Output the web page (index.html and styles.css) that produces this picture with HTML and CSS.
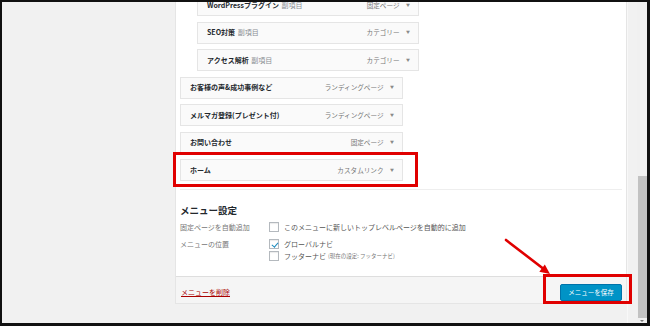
FILE: index.html
```html
<!DOCTYPE html>
<html lang="ja">
<head>
    <meta charset="UTF-8">
    <title>メニュー</title>
    <link rel="stylesheet" href="styles.css">
</head>
<body>
    <div class="frame">
        <div class="screen">
            <div class="side"></div>

            <div class="panel">
                <ul class="menu">
                    <li class="item sub">
                        <span class="title">WordPressプラグイン <em>副項目</em></span>
                        <span class="type">固定ページ <i>▼</i></span>
                    </li>
                    <li class="item sub">
                        <span class="title">SEO対策 <em>副項目</em></span>
                        <span class="type">カテゴリー <i>▼</i></span>
                    </li>
                    <li class="item sub">
                        <span class="title">アクセス解析 <em>副項目</em></span>
                        <span class="type">カテゴリー <i>▼</i></span>
                    </li>
                    <li class="item">
                        <span class="title">お客様の声&amp;成功事例など</span>
                        <span class="type">ランディングページ <i>▼</i></span>
                    </li>
                    <li class="item">
                        <span class="title">メルマガ登録(プレゼント付)</span>
                        <span class="type">ランディングページ <i>▼</i></span>
                    </li>
                    <li class="item">
                        <span class="title">お問い合わせ</span>
                        <span class="type">固定ページ <i>▼</i></span>
                    </li>
                    <li class="item marked">
                        <span class="title">ホーム</span>
                        <span class="type">カスタムリンク <i>▼</i></span>
                    </li>
                </ul>

                <div class="settings">
                    <h3>メニュー設定</h3>
                    <div class="row">
                        <span class="label">固定ページを自動追加</span>
                        <div class="opts">
                            <label><span class="box"></span>このメニューに新しいトップレベルページを自動的に追加</label>
                        </div>
                    </div>
                    <div class="row">
                        <span class="label">メニューの位置</span>
                        <div class="opts">
                            <label><span class="box checked"></span>グローバルナビ</label>
                            <label><span class="box"></span>フッターナビ <small>(現在の設定: フッターナビ)</small></label>
                        </div>
                    </div>
                </div>

                <div class="footer">
                    <a href="#" class="delete">メニューを削除</a>
                    <span class="save-wrap"><button class="save">メニューを保存</button></span>
                </div>
            </div>

            <div class="gutter"></div>
            <div class="scrollbar">
                <div class="thumb"></div>
                <span class="down"></span>
            </div>
        </div>

        <svg class="pointer" width="650" height="326" viewBox="0 0 650 326">
            <line x1="506" y1="240" x2="545" y2="270" stroke="#e00000" stroke-width="2.6" stroke-linecap="round"/>
            <polygon points="550,274 539.3,271.8 544.8,264.6" fill="#e00000"/>
        </svg>
    </div>
</body>
</html>
```

FILE: styles.css
```css
* {
    box-sizing: border-box;
}

body {
    margin: 0;
    font-family: "Noto Sans CJK JP", "Noto Sans", sans-serif;
    color: #23282d;
}

.frame {
    position: relative;
    width: 650px;
    height: 326px;
    border-style: solid;
    border-color: #111;
    border-width: 2px 3px 3px 2px;
    overflow: hidden;
    background: #f1f1f1;
}

.screen {
    display: flex;
    height: 100%;
}

.side {
    width: 173px;
    flex-shrink: 0;
}

/* panel with menu items */
.panel {
    width: 452px;
    flex-shrink: 0;
    align-self: flex-start;
    margin-top: -8px;
    background: #fff;
    border: 1px solid #e5e5e5;
    border-top: none;
}

.menu {
    list-style: none;
    margin: 0;
    padding: 0 4px;
}

.item {
    display: flex;
    justify-content: space-between;
    align-items: center;
    width: 223px;
    height: 22px;
    margin-bottom: 5.5px;
    padding: 0 8px 0 9px;
    background: #fafafa;
    border: 1px solid #e5e5e5;
    font-size: 7px;
    line-height: 1;
}

.item.sub {
    width: 222px;
    margin-left: 17px;
}

.title {
    font-weight: bold;
    color: #23282d;
}

.title em {
    font-style: normal;
    font-weight: normal;
    color: #8a8f94;
    margin-left: 1px;
}

.type {
    color: #777;
    font-size: 6.6px;
}

.type i {
    font-style: normal;
    font-size: 4px;
    margin-left: 5px;
    color: #8a8a8a;
    vertical-align: 1px;
}

.marked {
    position: relative;
}

.marked::after {
    content: "";
    position: absolute;
    left: -8px;
    right: -16px;
    top: -8px;
    bottom: -7px;
    border: 3px solid #e00000;
}

/* menu settings */
.settings {
    margin: 8px 4px 0;
    padding: 14px 0 14px;
    border-top: 1px solid #eee;
}

.settings h3 {
    margin: 0 0 5px;
    font-size: 9.5px;
    line-height: 12px;
    font-weight: bold;
    color: #23282d;
}

.row {
    display: flex;
    margin-bottom: 5px;
    font-size: 7px;
    line-height: 12px;
}

.row:last-child {
    margin-bottom: 0;
}

.label {
    width: 89px;
    flex-shrink: 0;
    color: #777;
}

.opts {
    display: flex;
    flex-direction: column;
    color: #555;
}

.opts label {
    display: flex;
    align-items: center;
}

.opts small {
    font-size: 5.5px;
    color: #777;
    margin-left: 2px;
}

.box {
    width: 10px;
    height: 10px;
    margin-right: 5px;
    border: 1px solid #b4b9be;
    background: #fff;
    box-shadow: inset 0 1px 1px rgba(0, 0, 0, 0.08);
    position: relative;
}

.box.checked::after {
    content: "";
    position: absolute;
    left: 2.5px;
    top: 0.5px;
    width: 2.5px;
    height: 5px;
    border: solid #1e8cbe;
    border-width: 0 1.6px 1.6px 0;
    transform: rotate(40deg);
}

/* footer */
.footer {
    display: flex;
    justify-content: space-between;
    align-items: center;
    height: 27px;
    padding: 4px 4px 0 5px;
    background: #f5f5f5;
    border-top: 1px solid #dedede;
}

.delete {
    color: #a00;
    font-size: 7px;
    text-decoration: underline;
}

.save-wrap {
    position: relative;
    display: flex;
}

.save-wrap::after {
    content: "";
    position: absolute;
    left: -17px;
    right: -10px;
    top: -10px;
    bottom: -3px;
    border: 3px solid #e00000;
}

.save {
    width: 62px;
    height: 17px;
    padding: 0;
    border: 1px solid #0073aa;
    border-radius: 2px;
    background: #0093c6;
    color: #fff;
    font-family: inherit;
    font-size: 6.5px;
}

.gutter {
    width: 10px;
    flex-shrink: 0;
    border-left: 1px solid #f8f8f8;
}

.scrollbar {
    width: 10px;
    flex-shrink: 0;
    display: flex;
    flex-direction: column;
    align-items: center;
    background: #f0f0f0;
}

.thumb {
    width: 9px;
    height: 142px;
    margin-top: 174px;
    margin-left: 1px;
    background: #c2c2c2;
}

.down {
    margin-top: 2px;
    width: 0;
    height: 0;
    border-left: 2px solid transparent;
    border-right: 2px solid transparent;
    border-top: 2px solid #777;
}

.pointer {
    position: absolute;
    left: -2px;
    top: -2px;
    pointer-events: none;
}
```
